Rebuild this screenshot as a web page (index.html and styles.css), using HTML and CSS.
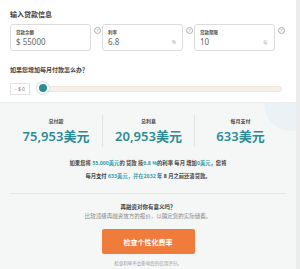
FILE: index.html
```html
<!DOCTYPE html>
<html lang="zh">
<head>
  <meta charset="UTF-8">
  <title>贷款计算器</title>
  <link rel="stylesheet" href="styles.css">
</head>
<body>
  <div class="calc">
    <div class="inputs">
      <div class="section-title">输入贷款信息</div>
      <div class="fields">
        <div class="field">
          <div class="box">
            <div class="label">贷款余额</div>
            <div class="value">$ 55000</div>
          </div>
          <span class="help">?</span>
        </div>
        <div class="field">
          <div class="box">
            <div class="label">利率</div>
            <div class="value">6.8<span class="unit">%</span></div>
          </div>
          <span class="help">?</span>
        </div>
        <div class="field">
          <div class="box">
            <div class="label">贷款期限</div>
            <div class="value">10<span class="unit">年</span></div>
          </div>
          <span class="help">?</span>
        </div>
      </div>
      <div class="question">如果您增加每月付款怎么办？</div>
      <div class="slider-row">
        <div class="extra">- $ 0</div>
        <div class="track">
          <span class="knob"></span>
        </div>
      </div>
    </div>

    <div class="results">
      <div class="totals">
        <div class="total">
          <div class="total-label">总付款</div>
          <div class="total-value">75,953美元</div>
        </div>
        <div class="total">
          <div class="total-label">总利息</div>
          <div class="total-value">20,953美元</div>
        </div>
        <div class="total">
          <div class="total-label">每月支付</div>
          <div class="total-value">633美元</div>
        </div>
      </div>
      <p class="summary">
        如果您将 <span class="hl">55,000美元</span>的 贷款 按<span class="hl">6.8 %</span>的利率 每月 增加<span class="hl">0美元</span>，您将<br>
        每月支付 <span class="hl">633美元，并在2032</span> 年 8 月之前还清贷款。
      </p>
      <div class="refi">
        <div class="refi-title">再融资对你有意义吗？</div>
        <div class="refi-text">比较顶级再融资放方的报价，以确定您的实际储蓄。</div>
        <button class="cta">检查个性化费率</button>
        <div class="note">检查利率不会影响您的信用评分。</div>
      </div>
    </div>
  </div>
</body>
</html>
```

FILE: styles.css
```css
body {
  margin: 0;
  font-family: "Noto Sans", "Noto Sans CJK SC", sans-serif;
  color: #333;
  background: #fff;
}
.calc {
  width: 296px;
  height: 269px;
  border-right: 4px solid #ececec;
  overflow: hidden;
  display: flex;
  flex-direction: column;
}
.inputs {
  padding: 10px 10px 0 10px;
  height: 92px;
}
.section-title {
  font-size: 7px;
  font-weight: bold;
  line-height: 10px;
  color: #444;
}
.fields {
  display: flex;
  margin-top: 4px;
}
.field {
  display: flex;
  align-items: flex-start;
  width: 97px;
}
.box {
  width: 74px;
  height: 25px;
  border: 1px solid #dcdcdc;
  border-radius: 3px;
  padding: 0 0 0 5px;
}
.label {
  font-size: 4.5px;
  font-weight: bold;
  line-height: 6px;
  margin-top: 4px;
  color: #555;
}
.value {
  font-size: 8px;
  line-height: 10px;
  margin-top: 2px;
  color: #666;
  display: flex;
  justify-content: space-between;
  padding-right: 6px;
}
.unit {
  font-size: 5px;
  color: #aaa;
}
.help {
  width: 5px;
  height: 5px;
  border: 1px solid #aaa;
  border-radius: 50%;
  font-size: 4px;
  line-height: 5px;
  text-align: center;
  color: #888;
  margin: 3px 0 0 3px;
}
.question {
  font-size: 6px;
  font-weight: bold;
  line-height: 8px;
  margin-top: 15px;
  color: #444;
}
.slider-row {
  display: flex;
  align-items: center;
  margin-top: 9px;
}
.extra {
  width: 20px;
  height: 12px;
  border: 1px solid #e2e2e2;
  font-size: 5px;
  line-height: 10px;
  text-align: center;
  color: #777;
  box-sizing: border-box;
}
.track {
  position: relative;
  flex: 1;
  height: 4px;
  margin: 0 4px 0 12px;
  background: #f5f1e8;
  border: 1px solid #ece6d8;
  border-radius: 3px;
}
.knob {
  position: absolute;
  left: -6px;
  top: -5px;
  width: 12px;
  height: 12px;
  border-radius: 50%;
  background: #2b8c96;
  border: 2px solid #fff;
  box-shadow: 0 0 0 1px #cfe3e5;
  box-sizing: border-box;
}
.results {
  position: relative;
  flex: 1;
  background: #f5f7f7;
  border-top: 1px solid #eceeee;
  padding: 12px 10px 0 10px;
  overflow: hidden;
}
.results::before {
  content: "";
  position: absolute;
  right: -22px;
  top: -26px;
  width: 54px;
  height: 54px;
  border-radius: 50%;
  background: #ebf2f6;
}
.totals {
  position: relative;
  display: grid;
  grid-template-columns: repeat(3, 1fr);
}
.total {
  text-align: center;
  padding: 2px 0;
}
.total + .total {
  border-left: 1px solid #e0e4e4;
}
.total-label {
  font-size: 5px;
  font-weight: bold;
  line-height: 8px;
  color: #444;
}
.total-value {
  font-size: 13px;
  font-weight: 600;
  line-height: 18px;
  margin-top: 2px;
  color: #2b8c96;
}
.summary {
  position: relative;
  margin: 10px 0 0 0;
  font-size: 5.3px;
  font-weight: bold;
  line-height: 13px;
  text-align: center;
  color: #444;
  padding-bottom: 10px;
  border-bottom: 1px solid #e4e8e8;
}
.hl {
  color: #3aa0aa;
}
.refi {
  text-align: center;
  padding-top: 9px;
}
.refi-title {
  font-size: 5.5px;
  font-weight: bold;
  line-height: 9px;
  color: #444;
}
.refi-text {
  font-size: 5.5px;
  line-height: 9px;
  color: #888;
}
.cta {
  display: block;
  margin: 8px auto 0;
  width: 93px;
  height: 25px;
  border: none;
  border-radius: 2px;
  background: #f07c3c;
  color: #fff;
  font-family: inherit;
  font-size: 7px;
  font-weight: bold;
}
.note {
  font-size: 4.5px;
  line-height: 8px;
  margin-top: 5px;
  color: #999;
}
```
